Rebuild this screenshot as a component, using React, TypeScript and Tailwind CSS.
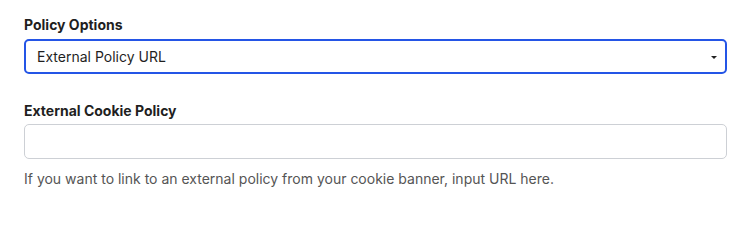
import React from "react";

export default function App() {
  return (
    <div className="w-[753px] h-[208px] bg-white pl-6 pr-[26px] pt-[15px] font-['Inter',sans-serif] text-[#1f1f1f]">
      <div className="flex flex-col">
        <label className="text-[14px] leading-[20px] font-bold">Policy Options</label>
        <div className="mt-[4px] h-[35px] rounded-[5px] border-2 border-[#2455e6] flex items-center justify-between pl-[11px] pr-[7px]">
          <span className="text-[14px] leading-[20px]">External Policy URL</span>
          <svg width="8" height="5" viewBox="0 0 8 5" className="mt-[1px]">
            <path d="M1 1 L7 1 L4 4 Z" fill="#222" />
          </svg>
        </div>
      </div>
      <div className="flex flex-col mt-[27px]">
        <label className="text-[14px] leading-[20px] font-bold">External Cookie Policy</label>
        <div className="mt-[3px] h-[35px] rounded-[5px] border border-[#cdd0d5]" />
        <p className="mt-[10px] text-[14px] leading-[20px] text-[#555]">
          If you want to link to an external policy from your cookie banner, input URL here.
        </p>
      </div>
    </div>
  );
}
